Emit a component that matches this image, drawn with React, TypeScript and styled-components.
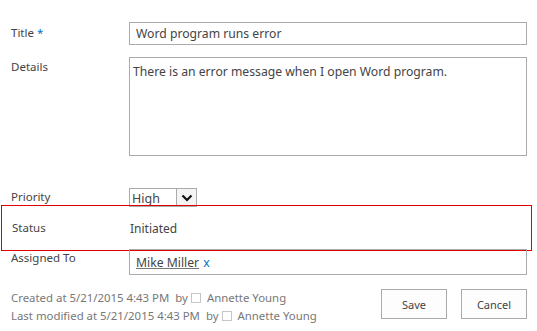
import styled, { createGlobalStyle } from 'styled-components';

const GlobalStyle = createGlobalStyle`
  html, body {
    margin: 0;
    padding: 0;
    background: #ffffff;
  }
  body {
    font-family: "Noto Sans", "Open Sans", sans-serif;
    color: #444444;
  }
`;

const Form = styled.div`
  width: 537px;
  height: 331px;
  padding: 22px 10px 0 11px;
  box-sizing: border-box;
  display: flex;
  flex-direction: column;
`;

const Row = styled.div<{ $top?: number }>`
  display: grid;
  grid-template-columns: 118px 398px;
  margin-top: ${props => props.$top ?? 0}px;
`;

const Label = styled.div<{ $pad?: number }>`
  font-size: 11.5px;
  color: #444444;
  padding-top: ${props => props.$pad ?? 0}px;
  line-height: 16px;
`;

const Required = styled.span`
  color: #0072c6;
  margin-left: 3px;
`;

const TextInput = styled.div`
  height: 23px;
  box-sizing: border-box;
  border: 1px solid #ababab;
  padding: 0 6px;
  font-size: 12.2px;
  line-height: 22px;
  color: #444444;
`;

const TextArea = styled.div`
  height: 99px;
  box-sizing: border-box;
  border: 1px solid #ababab;
  padding: 5px 3px;
  font-size: 12.2px;
  line-height: 18px;
  color: #444444;
`;

const Select = styled.div`
  display: flex;
  width: 68px;
  height: 19px;
  box-sizing: border-box;
  border: 1px solid #ababab;
`;

const SelectValue = styled.div`
  flex: 1;
  font-size: 12.5px;
  line-height: 20px;
  padding-left: 2px;
  color: #444444;
`;

const SelectButton = styled.div`
  width: 19px;
  border-left: 1px solid #ababab;
  background: #f4f4f4;
  display: flex;
  align-items: center;
  justify-content: center;
`;

const StatusRow = styled.div`
  display: grid;
  grid-template-columns: 118px 398px;
  align-items: center;
  height: 46px;
  box-sizing: border-box;
  margin: -2px -5px 0 -10px;
  padding-left: 10px;
  border: 1px solid #e00000;
`;

const StatusValue = styled.div`
  font-size: 12px;
  color: #444444;
`;

const PeopleInput = styled.div`
  height: 26px;
  box-sizing: border-box;
  border: 1px solid #ababab;
  padding: 0 6px;
  font-size: 12.2px;
  line-height: 25px;
`;

const PersonLink = styled.span`
  color: #444444;
  text-decoration: underline;
  text-decoration-color: #777777;
`;

const Remove = styled.span`
  color: #0072c6;
  margin-left: 4px;
`;

const Footer = styled.div`
  display: flex;
  justify-content: space-between;
  margin-top: 14px;
`;

const Meta = styled.div`
  font-size: 11.4px;
  color: #777777;
  line-height: 18px;
`;

const By = styled.span`
  margin-left: 6px;
  display: inline-flex;
  align-items: center;
`;

const Presence = styled.span`
  display: inline-block;
  width: 10px;
  height: 10px;
  box-sizing: border-box;
  border: 1px solid #c6c6c6;
  margin: 0 6px 0 3px;
`;

const Buttons = styled.div`
  display: flex;
  gap: 14px;
`;

const Button = styled.button`
  width: 66px;
  height: 30px;
  box-sizing: border-box;
  border: 1px solid #ababab;
  background: #fdfdfd;
  font-family: "Noto Sans", "Open Sans", sans-serif;
  font-size: 11px;
  color: #444444;
  padding: 0;
`;

function Chevron() {
  return (
    <svg width="12" height="8" viewBox="0 0 12 8">
      <path d="M1.5 1.5 L6 6 L10.5 1.5" fill="none" stroke="#111111" strokeWidth="2.2" />
    </svg>
  );
}

export default function App() {
  return (
    <>
      <GlobalStyle />
      <Form>
        <Row>
          <Label $pad={3}>Title<Required>*</Required></Label>
          <TextInput>Word program runs error</TextInput>
        </Row>
        <Row $top={12}>
          <Label $pad={2}>Details</Label>
          <TextArea>There is an error message when I open Word program.</TextArea>
        </Row>
        <Row $top={32}>
          <Label $pad={1}>Priority</Label>
          <Select>
            <SelectValue>High</SelectValue>
            <SelectButton><Chevron /></SelectButton>
          </Select>
        </Row>
        <StatusRow>
          <Label>Status</Label>
          <StatusValue>Initiated</StatusValue>
        </StatusRow>
        <Row $top={-2}>
          <Label $pad={1}>Assigned To</Label>
          <PeopleInput>
            <PersonLink>Mike Miller</PersonLink>
            <Remove>x</Remove>
          </PeopleInput>
        </Row>
        <Footer>
          <Meta>
            <div>Created at 5/21/2015 4:43 PM<By>by<Presence />Annette Young</By></div>
            <div>Last modified at 5/21/2015 4:43 PM<By>by<Presence />Annette Young</By></div>
          </Meta>
          <Buttons>
            <Button>Save</Button>
            <Button>Cancel</Button>
          </Buttons>
        </Footer>
      </Form>
    </>
  );
}
